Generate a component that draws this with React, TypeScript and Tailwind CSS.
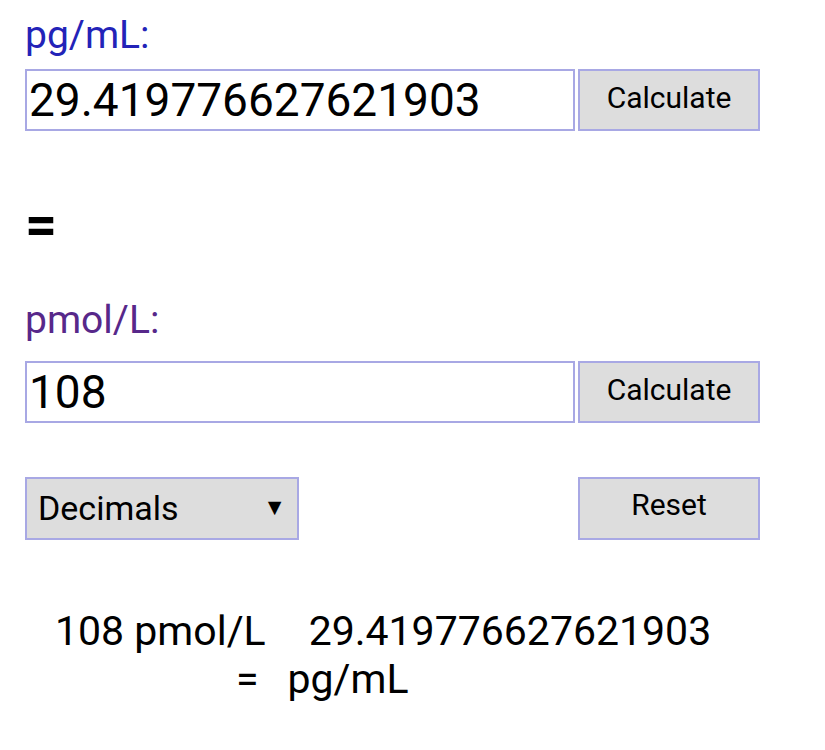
import React, { useState } from 'react';

const App: React.FC = () => {
  const [pg, setPg] = useState('29.419776627621903');
  const [pmol, setPmol] = useState('108');

  return (
    <div className="min-h-screen bg-white pl-[25px] font-['Roboto',sans-serif] text-black">
      {/* pg/mL */}
      <div className="pt-[12px] text-[39px] leading-[46px] text-[#2323b8]">pg/mL:</div>
      <div className="mt-[11px] flex gap-[3px]">
        <input
          value={pg}
          onChange={(e) => setPg(e.target.value)}
          className="h-[62px] w-[550px] border-2 border-[#a8a8e4] bg-white px-[2px] text-[46px] outline-none"
        />
        <button className="h-[62px] w-[182px] border-2 border-[#a8a8e4] bg-[#dddddd] pb-[6px] text-[30px]">
          Calculate
        </button>
      </div>

      <div className="mt-[71px] h-[48px] text-[56px] font-bold leading-[46px]">=</div>

      {/* pmol/L */}
      <div className="mt-[47px] text-[39px] leading-[46px] text-[#57288a]">pmol/L:</div>
      <div className="mt-[18px] flex gap-[3px]">
        <input
          value={pmol}
          onChange={(e) => setPmol(e.target.value)}
          className="h-[62px] w-[550px] border-2 border-[#a8a8e4] bg-white px-[2px] text-[46px] outline-none"
        />
        <button className="h-[62px] w-[182px] border-2 border-[#a8a8e4] bg-[#dddddd] pb-[6px] text-[30px]">
          Calculate
        </button>
      </div>

      <div className="mt-[54px] flex w-[735px] justify-between">
        <div className="flex h-[63px] w-[274px] items-center justify-between border-2 border-[#a8a8e4] bg-[#dddddd] pl-[11px] pr-[11px]">
          <span className="text-[34px]">Decimals</span>
          <span className="text-[23px]">▼</span>
        </div>
        <button className="h-[63px] w-[182px] border-2 border-[#a8a8e4] bg-[#dddddd] pb-[8px] text-[30px]">
          Reset
        </button>
      </div>

      {/* result */}
      <div className="mt-[67px] text-[41px] leading-[48px]">
        <div className="flex pl-[30px]">
          <span>108 pmol/L</span>
          <span className="ml-[43px]">29.419776627621903</span>
        </div>
        <div className="flex pl-[211px]">
          <span>=</span>
          <span className="ml-[29px]">pg/mL</span>
        </div>
      </div>
    </div>
  );
};

export default App;
